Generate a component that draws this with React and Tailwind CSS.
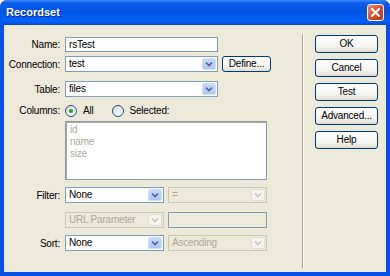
import React from 'react';

const Chevron = ({ color }) => (
  <svg width="8" height="6" viewBox="0 0 8 6">
    <path d="M1 1.5 L4 4.5 L7 1.5" fill="none" stroke={color} strokeWidth="1.6" />
  </svg>
);

const Select = ({ value, width, disabled }) => (
  <div
    className={`flex h-[16px] border ${width} ${
      disabled ? 'border-[#C9C7BA] bg-[#ECE9D8]' : 'border-[#7F9DB9] bg-white'
    }`}
  >
    <span className={`flex-1 pl-[3px] leading-[14px] ${disabled ? 'text-[#ACA899]' : 'text-black'}`}>
      {value}
    </span>
    <span
      className={`w-[14px] m-px flex items-center justify-center rounded-[2px] border ${
        disabled
          ? 'border-[#E0DED5] bg-[#F4F3EE]'
          : 'border-[#D2DDF9] bg-[linear-gradient(to_bottom,#C9D8FC,#B1C6F6)]'
      }`}
    >
      <Chevron color={disabled ? '#C9C7BA' : '#4D6185'} />
    </span>
  </div>
);

const Button = ({ label, width }) => (
  <div
    className={`h-[18px] ${width} flex items-center justify-center rounded-[3px] border border-[#003C74] bg-[linear-gradient(to_bottom,#FFFFFF,#F3F2EE_70%,#DEDBD1)] text-black leading-none`}
  >
    {label}
  </div>
);

const Radio = ({ checked }) => (
  <span className="w-[12px] h-[12px] rounded-full border border-[#1C5180] bg-[linear-gradient(135deg,#DCDCD6,#FFFFFF)] flex items-center justify-center">
    {checked && <span className="w-[4px] h-[4px] rounded-full bg-[#21A121]" />}
  </span>
);

const Row = ({ label, children, className }) => (
  <div className={`flex items-center ${className}`}>
    <span className="w-[57px] pr-[1px] text-right">{label}</span>
    <div className="ml-[4px] flex items-center gap-[4px]">{children}</div>
  </div>
);

export default function App() {
  return (
    <div className="w-[390px] h-[276px] flex flex-col rounded-t-[7px] overflow-hidden bg-[#0450E8] font-['Liberation_Sans',Arial,sans-serif] text-[10px] tracking-[-0.2px] text-black">
      <div className="h-[25px] shrink-0 flex items-center justify-between pl-[6px] pr-[6px] bg-[linear-gradient(to_bottom,#3D8BFF_0%,#0A5EEE_12%,#0054E3_45%,#0061F8_85%,#0049D8_100%)]">
        <span className="text-white font-bold text-[11px] tracking-normal [text-shadow:1px_1px_0_#0A2A8A]">Recordset</span>
        <div className="w-[17px] h-[17px] rounded-[3px] border border-white bg-[linear-gradient(135deg,#EC8B6C,#D5492A_55%,#C0361A)] flex items-center justify-center">
          <svg width="9" height="9" viewBox="0 0 9 9">
            <path d="M1 1 L8 8 M8 1 L1 8" stroke="white" strokeWidth="2" strokeLinecap="square" />
          </svg>
        </div>
      </div>

      <div className="flex-1 mx-[4px] mb-[4px] bg-[#ECE9D8] flex">
        <div className="w-[298px] pt-[12px] flex flex-col">
          <Row label="Name:">
            <div className="w-[153px] h-[15px] border border-[#7F9DB9] bg-white pl-[3px] leading-[13px]">rsTest</div>
          </Row>
          <Row label="Connection:" className="mt-[4px]">
            <Select value="test" width="w-[153px]" />
            <div className="h-[16px] w-[49px] flex items-center justify-center rounded-[3px] border border-[#003C74] bg-[linear-gradient(to_bottom,#FFFFFF,#F3F2EE_70%,#DEDBD1)] leading-none">
              Define...
            </div>
          </Row>
          <Row label="Table:" className="mt-[9px]">
            <Select value="files" width="w-[153px]" />
          </Row>
          <Row label="Columns:" className="mt-[7px] h-[13px]">
            <Radio checked />
            <span className="ml-[2px]">All</span>
            <span className="ml-[14px]"><Radio /></span>
            <span className="ml-[2px]">Selected:</span>
          </Row>
          <div className="mt-[4px] ml-[61px] w-[202px] h-[59px] border border-[#8B9CB0] shadow-[inset_1px_1px_0_#ACA899] bg-white pl-[4px] pt-[2px] text-[#ACA899] leading-[12px] flex flex-col">
            <span>id</span>
            <span>name</span>
            <span>size</span>
          </div>
          <Row label="Filter:" className="mt-[7px]">
            <Select value="None" width="w-[99px]" />
            <Select value="=" width="w-[99px]" disabled />
          </Row>
          <Row label="" className="mt-[9px]">
            <Select value="URL Parameter" width="w-[99px]" disabled />
            <div className="w-[99px] h-[16px] border border-[#7F9DB9] bg-[#ECE9D8]" />
          </Row>
          <Row label="Sort:" className="mt-[7px]">
            <Select value="None" width="w-[99px]" />
            <Select value="Ascending" width="w-[99px]" disabled />
          </Row>
        </div>

        <div className="mt-[9px] mb-[4px] w-[2px] border-l border-[#ACA899] bg-white" />

        <div className="pl-[11px] pt-[10px] flex flex-col gap-[6px]">
          <Button label="OK" width="w-[63px]" />
          <Button label="Cancel" width="w-[63px]" />
          <Button label="Test" width="w-[63px]" />
          <Button label="Advanced..." width="w-[63px]" />
          <Button label="Help" width="w-[63px]" />
        </div>
      </div>
    </div>
  );
}
